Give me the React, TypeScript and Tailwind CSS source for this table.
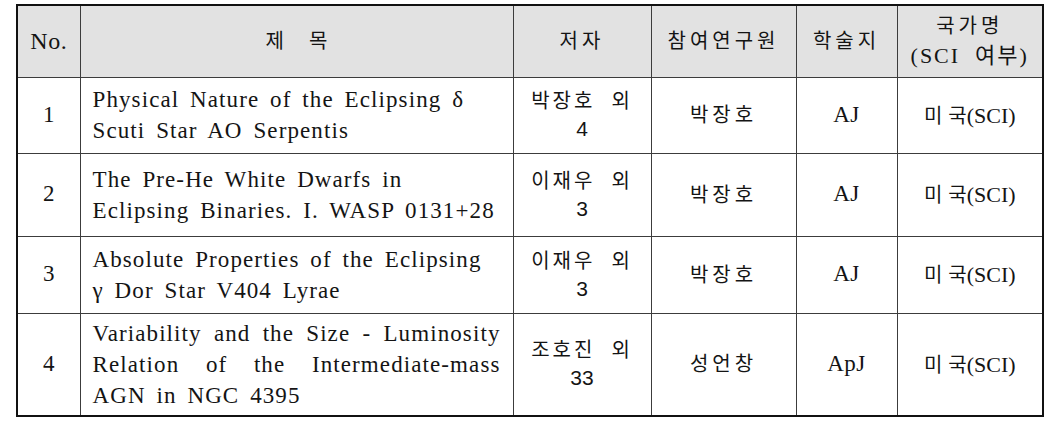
import React from "react";

type Row = {
  no: string;
  title: { text: string; justify?: boolean }[];
  author: [string, string];
  member: string;
  journal: string;
  h: string;
};

const rows: Row[] = [
  {
    no: "1",
    title: [{ text: "Physical Nature of the Eclipsing δ" }, { text: "Scuti Star AO Serpentis" }],
    author: ["박장호 외", "4"],
    member: "박장호",
    journal: "AJ",
    h: "h-[76px]",
  },
  {
    no: "2",
    title: [{ text: "The Pre-He White Dwarfs in" }, { text: "Eclipsing Binaries. I. WASP 0131+28" }],
    author: ["이재우 외", "3"],
    member: "박장호",
    journal: "AJ",
    h: "h-[83px]",
  },
  {
    no: "3",
    title: [{ text: "Absolute Properties of the Eclipsing" }, { text: "γ Dor Star V404 Lyrae" }],
    author: ["이재우 외", "3"],
    member: "박장호",
    journal: "AJ",
    h: "h-[77px]",
  },
  {
    no: "4",
    title: [
      { text: "Variability and the Size - Luminosity", justify: true },
      { text: "Relation of the Intermediate-mass", justify: true },
      { text: "AGN in NGC 4395" },
    ],
    author: ["조호진 외", "33"],
    member: "성언창",
    journal: "ApJ",
    h: "h-[103px]",
  },
];

const cell = "border border-[#3c3c3c] text-center align-middle p-0";

export default function App() {
  return (
    <div className="bg-white w-[1059px] h-[424px] pt-[4px] pl-[16px] text-[#141414] font-['Liberation_Serif','Noto_Sans_CJK_KR',serif]">
      <table className="table-fixed border-collapse border-2 border-[#111] w-[1028px]">
        <colgroup>
          <col className="w-[63px]" />
          <col className="w-[433px]" />
          <col className="w-[138px]" />
          <col className="w-[145px]" />
          <col className="w-[101px]" />
          <col className="w-[146px]" />
        </colgroup>
        <thead>
          <tr className="h-[72px] bg-[#e2e2e2]">
            <th className={`${cell} font-normal text-[24px] tracking-[0.5px]`}>No.</th>
            <th className={`${cell} font-normal text-[20px] whitespace-pre`}>제     목</th>
            <th className={`${cell} font-normal text-[20px] tracking-[4px]`}>저자</th>
            <th className={`${cell} font-normal text-[20px] tracking-[4px]`}>참여연구원</th>
            <th className={`${cell} font-normal text-[20px] tracking-[4px]`}>학술지</th>
            <th className={`${cell} font-normal text-[20px] leading-[29px]`}>
              <div className="tracking-[4px]">국가명</div>
              <div className="text-[22px] tracking-[2px] whitespace-pre">(SCI  여부)</div>
            </th>
          </tr>
        </thead>
        <tbody>
          {rows.map((r) => (
            <tr key={r.no} className={r.h}>
              <td className={`${cell} text-[23px]`}>{r.no}</td>
              <td className={`${cell} text-left text-[23px] leading-[31px] tracking-[1.1px] [word-spacing:4px] pl-[12px] pr-[12px]`}>
                {r.title.map((l, i) => (
                  <div key={i} className={l.justify ? "text-justify [text-align-last:justify]" : ""}>
                    {l.text}
                  </div>
                ))}
              </td>
              <td className={`${cell} text-[20px] leading-[28px]`}>
                <div className="tracking-[3px] whitespace-pre">{r.author[0].replace(" ", "  ")}</div>
                <div className="font-['Liberation_Sans',sans-serif] text-[21px]">{r.author[1]}</div>
              </td>
              <td className={`${cell} text-[20px] tracking-[4px]`}>{r.member}</td>
              <td className={`${cell} text-[23px] tracking-[0.5px]`}>{r.journal}</td>
              <td className={`${cell} text-[20px]`}>
                <span className="tracking-[6px]">미</span>
                <span>국</span>
                <span className="text-[22px]">(SCI)</span>
              </td>
            </tr>
          ))}
        </tbody>
      </table>
    </div>
  );
}
